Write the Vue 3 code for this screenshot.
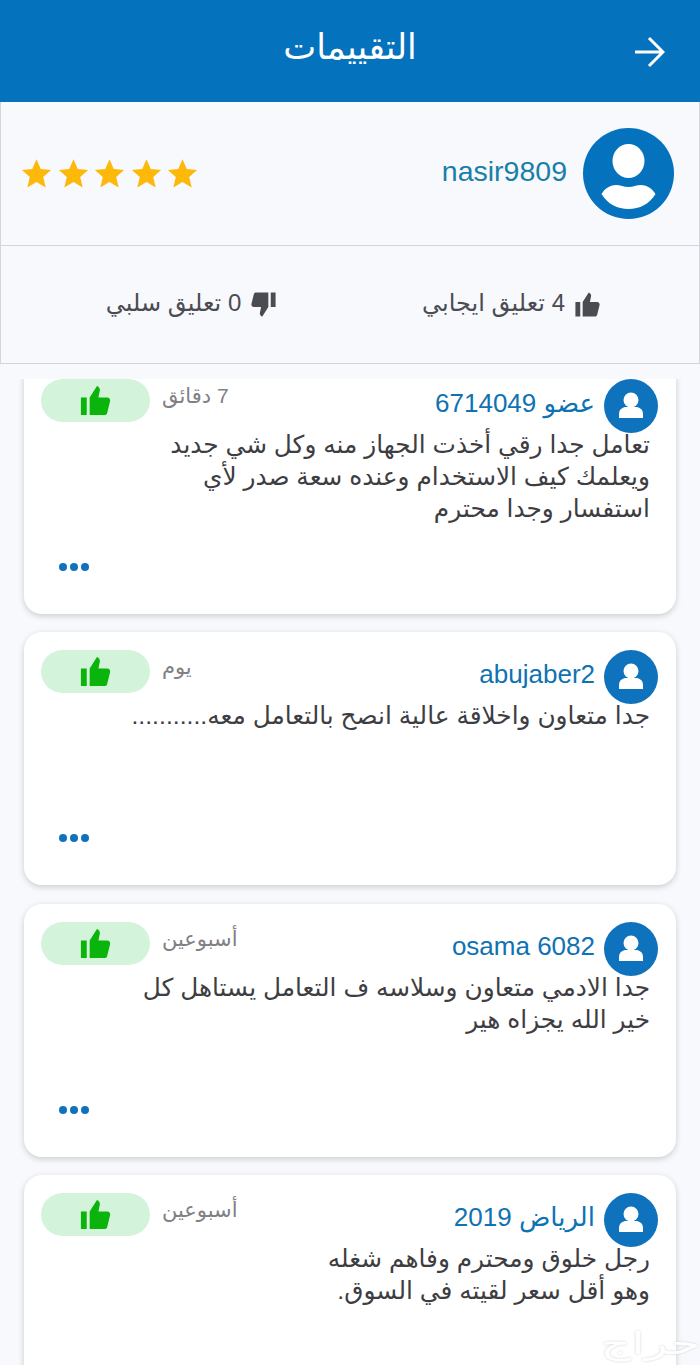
<template>
  <div class="page" dir="rtl">
    <header class="topbar">
      <svg class="back" viewBox="0 0 32 32" width="32" height="32">
        <path d="M2 16h27M16 2l14 14-14 14" fill="none" stroke="#fff" stroke-width="3" />
      </svg>
      <h1>التقييمات</h1>
    </header>

    <section class="summary">
      <div class="profile">
        <div class="big-avatar">
          <svg viewBox="0 0 91 91" width="91" height="91">
            <ellipse cx="45.500" cy="33" rx="16" ry="17" fill="#fff" />
            <path d="M18.500 66c3.500-6 9.500-9 14.500-9 4 0 8 2 12.500 2s8-2 12.500-2c5 0 11 3 14.500 9-6 10-16 15-27 15s-21-5-27-15z" fill="#fff" />
          </svg>
        </div>
        <span class="seller">nasir9809</span>
        <div class="stars">
          <svg v-for="n in 5" :key="n" viewBox="0 0 24 24" width="31" height="31">
            <path d="M12 1l3.300 7.600 8 .7-6.100 5.400 1.900 8.100L12 18.500l-7.100 4.300 1.900-8.100L.7 9.300l8-.7z" fill="#fdb90a" />
          </svg>
        </div>
      </div>
      <div class="stats">
        <div class="stat">
          <svg viewBox="0 0 24 24" width="29" height="29">
            <path :d="thumbPath" fill="#4b4b52" />
          </svg>
          <span>4 تعليق ايجابي</span>
        </div>
        <div class="stat">
          <svg class="down" viewBox="0 0 24 24" width="29" height="29">
            <path :d="thumbPath" fill="#4b4b52" />
          </svg>
          <span>0 تعليق سلبي</span>
        </div>
      </div>
    </section>

    <main class="list">
      <article v-for="item in reviews" :key="item.name" class="card">
        <div class="card-head">
          <div class="avatar">
            <svg viewBox="0 0 54 54" width="54" height="54">
              <circle cx="27" cy="21" r="7.500" fill="#fff" />
              <path d="M15 39v-4c0-5 4-7 7-7h10c3 0 7 2 7 7v4z" fill="#fff" />
            </svg>
          </div>
          <span class="name">{{ item.name }}</span>
          <span class="time">{{ item.time }}</span>
          <div class="pill">
            <svg viewBox="0 0 24 24" width="35" height="35">
              <path :d="thumbPath" fill="#0ab40a" />
            </svg>
          </div>
        </div>
        <div class="body">
          <p v-for="line in item.lines" :key="line">{{ line }}</p>
        </div>
        <div class="more"><i></i><i></i><i></i></div>
      </article>
    </main>

    <div class="watermark">حراج</div>
  </div>
</template>

<script setup>
const thumbPath =
  "M2 10h4v12H2zM8 22h10c1 0 1.800-.6 2-1.500l2-8c.3-1.300-.7-2.500-2-2.500h-6l1-5c.2-1-.5-2.500-2-3L8 10z";

const reviews = [
  {
    name: "عضو 6714049",
    time: "7 دقائق",
    lines: [
      "تعامل جدا رقي أخذت الجهاز منه وكل شي جديد",
      "ويعلمك كيف الاستخدام وعنده سعة صدر لأي",
      "استفسار وجدا محترم",
    ],
  },
  {
    name: "abujaber2",
    time: "يوم",
    lines: ["جدا متعاون واخلاقة عالية انصح بالتعامل معه..........."],
  },
  {
    name: "osama 6082",
    time: "أسبوعين",
    lines: ["جدا الادمي متعاون وسلاسه ف التعامل يستاهل كل", "خير الله يجزاه هير"],
  },
  {
    name: "الرياض 2019",
    time: "أسبوعين",
    lines: ["رجل خلوق ومحترم وفاهم شغله", "وهو أقل سعر لقيته في السوق."],
  },
];
</script>

<style>
body {
  background: #f7f9fd;
}
</style>

<style scoped>
.page {
  position: relative;
  display: flex;
  flex-direction: column;
  height: 1365px;
  overflow: hidden;
  background: #f7f9fd;
  font-family: "Liberation Sans", "DejaVu Sans", sans-serif;
}

.topbar {
  position: relative;
  flex: none;
  height: 102px;
  background: #0572bd;
  display: flex;
  align-items: center;
  justify-content: center;
}

.topbar h1 {
  margin: 0 0 8px;
  color: #fff;
  font-size: 35px;
  font-weight: 400;
}

.back {
  position: absolute;
  right: 35px;
  top: 36px;
}

.summary {
  flex: none;
  border: 1px solid #d2d5dc;
  border-top: none;
}

.profile {
  height: 143px;
  display: flex;
  align-items: center;
  padding: 0 25px 0 20px;
  border-bottom: 1px solid #d2d5dc;
}

.big-avatar {
  width: 91px;
  height: 91px;
  border-radius: 50%;
  background: #0572bd;
  overflow: hidden;
}

.seller {
  margin: 0 16px 4px 0;
  color: #1a7fa8;
  font-size: 28.500px;
}

.stars {
  margin-right: auto;
  display: flex;
  gap: 5.500px;
}

.stats {
  height: 117px;
  display: grid;
  grid-template-columns: 320px 320px;
  padding: 0 27px 0 32px;
  align-items: center;
}

.stat {
  display: flex;
  align-items: center;
  justify-content: center;
  gap: 8px;
  color: #4b4b52;
  font-size: 24px;
}

.stat span {
  margin-bottom: 4px;
}

.down {
  transform: rotate(180deg);
}

.list {
  flex: 1;
  min-height: 0;
  margin-top: 15px;
  padding: 0 24px;
  overflow: hidden;
}

.card {
  box-sizing: border-box;
  height: 253px;
  margin-bottom: 18.330px;
  padding: 18px 18px 0 17px;
  background: #fff;
  border-radius: 18px;
  box-shadow: 0 2px 6px rgba(0, 0, 0, 0.18);
}

.card:first-child {
  margin-top: -18px;
}

.card-head {
  display: flex;
  align-items: center;
  height: 54px;
}

.avatar {
  flex: none;
  width: 54px;
  height: 54px;
  border-radius: 50%;
  background: #0f72bd;
}

.name {
  margin: 0 9px 5px 0;
  color: #0f72b3;
  font-size: 26px;
}

.time {
  margin-right: auto;
  margin-bottom: 20px;
  color: #808085;
  font-size: 21px;
}

.pill {
  margin: 0 12px 0 0;
  align-self: flex-start;
  width: 109px;
  height: 43px;
  border-radius: 22px;
  background: #d3f3da;
  display: flex;
  align-items: center;
  justify-content: center;
}

.body {
  height: 129px;
  color: #3d3d42;
  font-size: 24.800px;
  line-height: 32px;
  margin-top: -4px;
  padding-right: 8px;
}

.body p {
  margin: 0;
  white-space: nowrap;
}

.more {
  display: flex;
  gap: 3px;
  justify-content: flex-end;
  padding-left: 18px;
  margin-top: 5px;
}

.more i {
  width: 8px;
  height: 8px;
  border-radius: 50%;
  background: #0f72bd;
}

.watermark {
  position: absolute;
  right: 18px;
  bottom: 4px;
  color: #fff;
  font-size: 30px;
  text-shadow: 0 0 2px #cfcfcf;
  transform: scaleX(1.600);
}
</style>
